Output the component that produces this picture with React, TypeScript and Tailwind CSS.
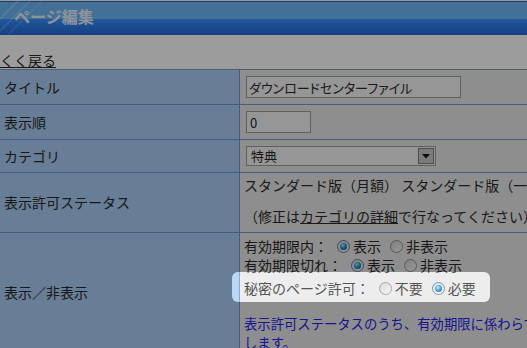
import React from "react";

function Radio({ checked }: { checked?: boolean }) {
  return (
    <span
      className={
        "relative inline-block w-[13px] h-[13px] shrink-0 rounded-full border ml-[9px] mr-[3px] " +
        (checked
          ? "border-[#5a7b97] bg-[linear-gradient(180deg,#d8dde2,#f4f6f8)]"
          : "border-[#8e9092] bg-[linear-gradient(135deg,#cfd1d3,#f7f7f7)]")
      }
    >
      {checked && (
        <span className="absolute left-[2px] top-[2px] w-[7px] h-[7px] rounded-full bg-[radial-gradient(circle_at_40%_35%,#bdf0ff_0%,#3aa6e0_35%,#146aa6_70%,#0b3e6a_100%)]" />
      )}
    </span>
  );
}

export default function App() {
  return (
    <div className="relative w-[527px] h-[348px] overflow-hidden bg-white text-[14px] text-[#2a2a2a] [font-family:'Noto_Sans_CJK_JP','Noto_Sans',sans-serif]">
      {/* Header */}
      <div className="relative h-[35px] border-t border-white">
        <div className="h-px bg-[#355faf]" />
        <div className="h-[17px] bg-[#6eb7f7]" />
        <div className="h-[16px] bg-[linear-gradient(180deg,#3a8fff,#2368d6)]" />
        <svg className="absolute left-0 top-0" width="60" height="35" viewBox="0 0 60 35">
          <line x1="-4" y1="22" x2="22" y2="-4" stroke="rgba(255,255,255,0.35)" strokeWidth="1.2" />
          <line x1="-4" y1="34" x2="34" y2="-4" stroke="rgba(255,255,255,0.28)" strokeWidth="1.2" />
          <line x1="4" y1="38" x2="44" y2="-2" stroke="rgba(255,255,255,0.18)" strokeWidth="1.2" />
        </svg>
        <div className="absolute left-[14px] top-[3px] text-[16px] leading-[24px] font-bold text-[#e6f2ff]">
          ページ編集
        </div>
      </div>

      {/* Back link */}
      <div className="h-[34px] flex items-end">
        <a className="underline leading-[16px] mb-[1px] text-[#2a2a2a]">くく戻る</a>
      </div>

      {/* Table */}
      <div className="w-[760px] border-t border-[#8099b5]">
        {/* row 1 */}
        <div className="flex border-b border-[#6b9bd4]">
          <div className="w-[240px] h-[34px] border-r border-[#6a98c8] bg-[#a8cef5] flex items-center pl-[4px]">
            タイトル
          </div>
          <div className="flex-1 bg-[#e9e9e9] pt-[6px] pl-[6px]">
            <input
              readOnly
              value="ダウンロードセンターファイル"
              className="block w-[215px] h-[22px] border border-[#9b9b9b] bg-[#f6f6f6] px-[2px] text-[13px] text-[#2a2a2a] [font-feature-settings:'palt'] outline-none"
            />
          </div>
        </div>
        {/* row 2 */}
        <div className="flex border-b border-[#6b9bd4]">
          <div className="w-[240px] h-[34px] border-r border-[#6a98c8] bg-[#a8cef5] flex items-center pl-[4px]">
            表示順
          </div>
          <div className="flex-1 bg-[#e9e9e9] pt-[6px] pl-[6px]">
            <input
              readOnly
              value="0"
              className="block w-[65px] h-[22px] border border-[#9b9b9b] bg-[#f6f6f6] px-[3px] text-[13px] text-[#1c1c3a] outline-none"
            />
          </div>
        </div>
        {/* row 3 */}
        <div className="flex border-b border-[#6b9bd4]">
          <div className="w-[240px] h-[32px] border-r border-[#6a98c8] bg-[#a8cef5] flex items-center pl-[4px]">
            カテゴリ
          </div>
          <div className="flex-1 bg-[#e9e9e9] pt-[6px] pl-[6px]">
            <div className="flex w-[190px] h-[20px] border border-[#9b9b9b] bg-[#f6f6f6]">
              <span className="flex-1 pl-[4px] text-[13px] leading-[18px]">特典</span>
              <span className="w-[16px] h-[16px] m-[1px] border border-[#7e7e7e] bg-[#cacaca] flex items-center justify-center">
                <svg width="8" height="5" viewBox="0 0 8 5">
                  <polygon points="0,0 8,0 4,4.5" fill="#111" />
                </svg>
              </span>
            </div>
          </div>
        </div>
        {/* row 4 */}
        <div className="flex border-b border-[#6b9bd4]">
          <div className="w-[240px] h-[59px] border-r border-[#6a98c8] bg-[#a8cef5] flex items-center pl-[4px]">
            表示許可ステータス
          </div>
          <div className="flex-1 bg-[#e9e9e9] pt-[5px] pl-[4px] leading-[15.5px] whitespace-nowrap">
            <div>スタンダード版（月額） スタンダード版（一括） プレミアム版</div>
            <div>&nbsp;</div>
            <div>
              （修正は<a className="underline">カテゴリの詳細</a>で行なってください）
            </div>
          </div>
        </div>
        {/* row 5 */}
        <div className="flex">
          <div className="w-[240px] h-[118px] border-r border-[#6a98c8] bg-[#a8cef5] flex items-center pl-[4px]">
            表示／非表示
          </div>
          <div className="flex-1 bg-[#e9e9e9] pt-[4px] pl-[4px] whitespace-nowrap">
            <div className="flex items-center h-[19px]">
              <span>有効期限内：</span>
              <Radio checked />
              <span>表示</span>
              <Radio />
              <span>非表示</span>
            </div>
            <div className="flex items-center h-[19px]">
              <span>有効期限切れ：</span>
              <Radio checked />
              <span>表示</span>
              <Radio />
              <span>非表示</span>
            </div>
            <div className="flex items-center h-[22px] mt-[2px]">
              <span>秘密のページ許可：</span>
              <Radio />
              <span>不要</span>
              <Radio checked />
              <span>必要</span>
            </div>
            <div className="mt-[16px] text-[13.33px] leading-[18.5px] text-[#2222ee]">
              表示許可ステータスのうち、有効期限に係わらず秘密のページを閲覧できるか設定
              <br />
              します。
            </div>
          </div>
        </div>
      </div>

      {/* Spotlight overlay */}
      <div className="absolute left-[232px] top-[272px] w-[258px] h-[30px] rounded-[6px] bg-white/20 shadow-[0_0_0_9999px_rgba(0,0,0,0.39)] z-10" />
    </div>
  );
}
